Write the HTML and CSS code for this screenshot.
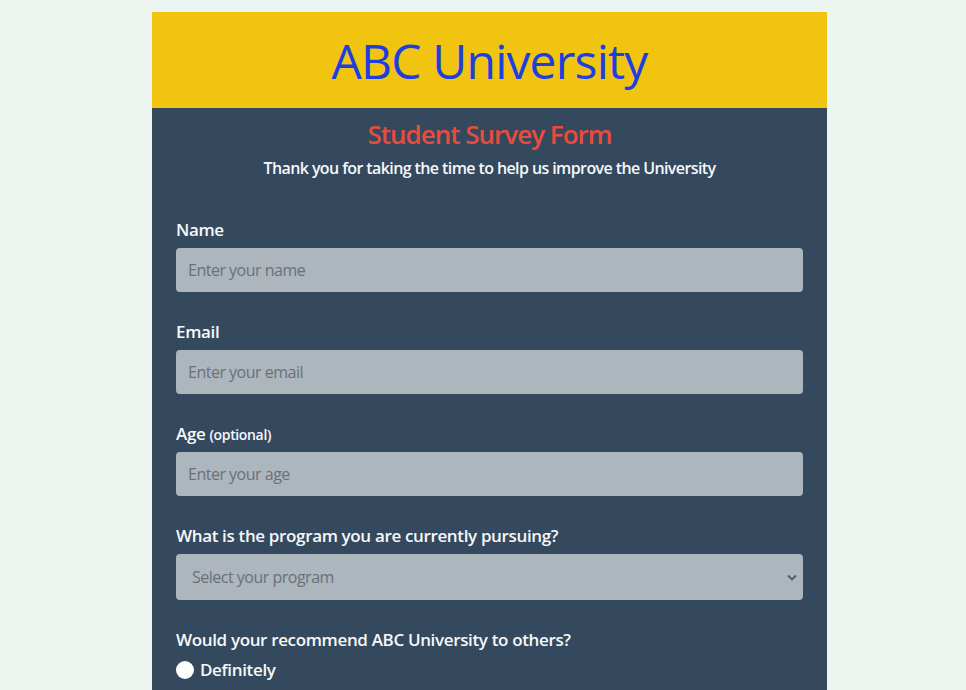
FILE: index.html
```html
<!DOCTYPE html>
<html lang="en">
<head>
<meta charset="utf-8">
<title>ABC University Survey</title>
<link rel="stylesheet" href="styles.css">
</head>
<body>
<div class="container">
  <header class="banner">
    <h1 class="uni">ABC University</h1>
  </header>
  <main class="panel">
    <h2 class="title">Student Survey Form</h2>
    <p class="desc">Thank you for taking the time to help us improve the University</p>
    <form class="form">
      <div class="group">
        <label class="label" for="name">Name</label>
        <input class="field" id="name" type="text" placeholder="Enter your name">
      </div>
      <div class="group">
        <label class="label" for="email">Email</label>
        <input class="field" id="email" type="email" placeholder="Enter your email">
      </div>
      <div class="group">
        <label class="label" for="age">Age <span class="opt">(optional)</span></label>
        <input class="field" id="age" type="number" placeholder="Enter your age">
      </div>
      <div class="group">
        <label class="label" for="prog">What is the program you are currently pursuing?</label>
        <div class="select-wrap">
          <select class="field select" id="prog">
            <option>Select your program</option>
          </select>
          <svg class="chev" width="10" height="7" viewBox="0 0 10 7"><path d="M1 1.5 L5 5.5 L9 1.5" fill="none" stroke="#555c63" stroke-width="1.8"/></svg>
        </div>
      </div>
      <div class="group">
        <p class="label">Would your recommend ABC University to others?</p>
        <label class="radio"><span class="dot"></span>Definitely</label>
      </div>
    </form>
  </main>
</div>
</body>
</html>
```
FILE: styles.css
```css
* { box-sizing: border-box; }
html, body { margin: 0; padding: 0; }
body {
  background: #ecf5f0;
  font-family: "Open Sans", "Noto Sans", sans-serif;
  padding-top: 12px;
}
.container {
  width: 675px;
  margin-left: 152px;
}
.banner {
  background: #f1c40f;
  height: 96px;
  display: flex;
  align-items: center;
  justify-content: center;
}
.uni {
  margin: 0;
  color: #1d3ee0;
  font-size: 48px;
  font-weight: 400;
  letter-spacing: -0.8px;
}
.panel {
  background: #34495e;
  padding: 9px 24px 40px;
  min-height: 600px;
}
.title {
  margin: 0 0 5px;
  text-align: center;
  color: #e74c3c;
  font-size: 26px;
  font-weight: 600;
  letter-spacing: -1px;
  line-height: 34px;
}
.desc {
  margin: 0;
  text-align: center;
  color: #f6f8fa;
  font-size: 16px;
  font-weight: 600;
  letter-spacing: -0.6px;
  line-height: 24px;
}
.form { margin-top: 38px; }
.group { margin-bottom: 28px; }
.label {
  display: block;
  margin: 0 0 6px;
  color: #f6f8fa;
  font-size: 17px;
  font-weight: 600;
  letter-spacing: -0.35px;
  line-height: 24px;
}
.opt { font-size: 14px; line-height: 1; }
.field {
  display: block;
  width: 100%;
  height: 44px;
  border: none;
  border-radius: 4px;
  background: #adb5bd;
  padding: 0 12px;
  font-family: inherit;
  font-size: 16px;
  letter-spacing: -0.5px;
  color: #495057;
}
.field::placeholder { color: #6a7178; }
.select-wrap { position: relative; }
.select {
  height: 46px;
  appearance: none;
  -webkit-appearance: none;
  color: #6a7178;
  padding: 0 16px;
}
.chev { position: absolute; right: 6px; top: 20px; }
.radio {
  display: flex;
  align-items: center;
  gap: 6px;
  color: #f6f8fa;
  font-size: 17px;
  font-weight: 600;
  letter-spacing: -0.35px;
}
.dot {
  width: 18px;
  height: 18px;
  border-radius: 50%;
  background: #fff;
}
```
